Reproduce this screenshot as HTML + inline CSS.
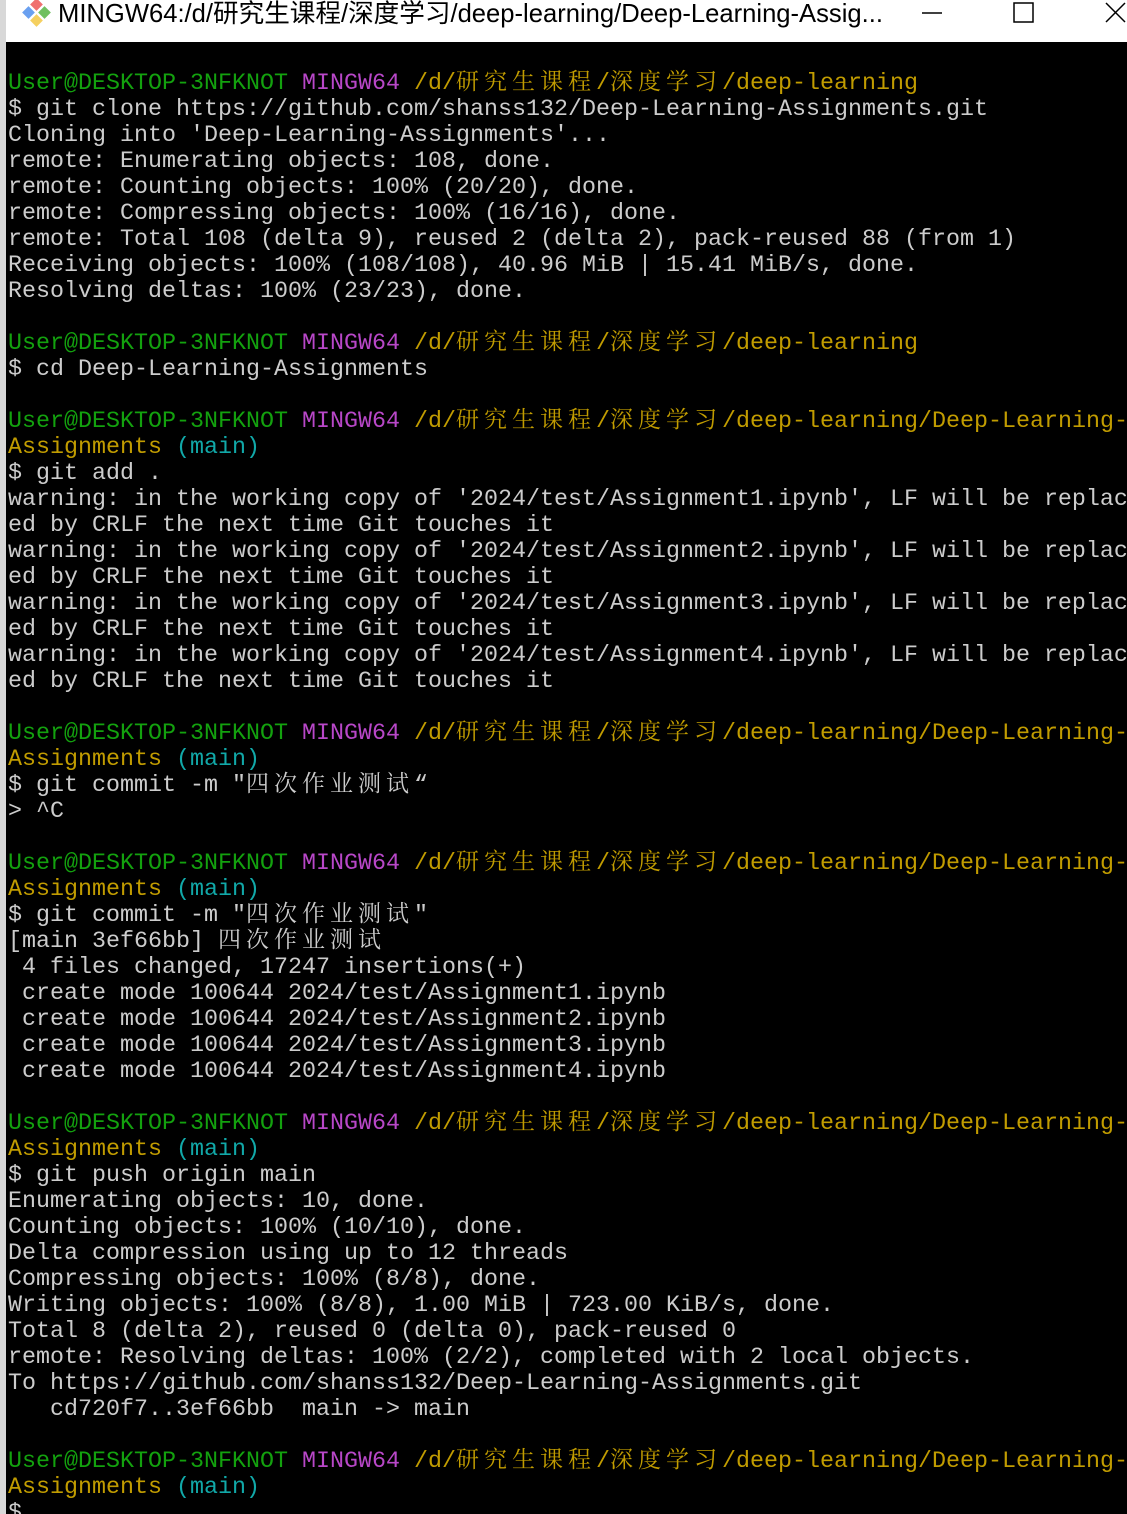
<!DOCTYPE html>
<html><head><meta charset="utf-8"><style>
html,body{margin:0;padding:0;width:1127px;height:1514px;overflow:hidden;background:#000}
#tb{position:absolute;left:0;top:0;width:1127px;height:42px;background:#fff}
#lb{position:absolute;left:0;top:0;width:6px;height:1514px;background:#d8d8d8}
#title{position:absolute;left:58px;top:-7px;font:25.6px "Liberation Sans","Noto Sans CJK SC",sans-serif;color:#000;white-space:nowrap}
#term{position:absolute;left:8px;top:45px;width:1119px;height:1469px;overflow:hidden;margin:0;
font:23.33px/26px "Liberation Mono","Noto Serif CJK SC",monospace;color:#cccccc;white-space:pre}
.g{color:#13a10e}.m{color:#b847c8}.y{color:#c19c00}.c{color:#11a8a8}
.z{font-family:"Noto Serif CJK SC",serif;font-size:23px;letter-spacing:5px;line-height:0}
</style></head><body>
<div id="tb"></div><div id="lb"></div>
<svg style="position:absolute;left:20px;top:0" width="34" height="30" viewBox="0 0 34 30">
<rect x="4" y="8" width="9" height="9" fill="#6aa0f0" transform="rotate(45 8.5 12.5)"/>
<rect x="20" y="8" width="9" height="9" fill="#70c060" transform="rotate(45 24.5 12.5)"/>
<rect x="12" y="16" width="9" height="9" fill="#f5d060" transform="rotate(45 16.5 20.5)"/>
<rect x="12" y="0" width="9" height="9" fill="#f07070" transform="rotate(45 16.5 4.5)"/>
</svg>
<div id="title">MINGW64:/d/研究生课程/深度学习/deep-learning/Deep-Learning-Assig...</div>
<svg style="position:absolute;left:920px;top:0" width="207" height="30">
<line x1="2" y1="13" x2="22" y2="13" stroke="#000" stroke-width="1.5"/>
<rect x="94" y="3" width="19" height="19" fill="none" stroke="#000" stroke-width="1.5"/>
<path d="M186 3 L205 22 M205 3 L186 22" stroke="#000" stroke-width="1.5"/>
</svg>
<pre id="term">

<span class="g">User@DESKTOP-3NFKNOT</span> <span class="m">MINGW64</span> <span class="y">/d/<span class="z">研究生课程</span>/<span class="z">深度学习</span>/deep-learning</span>
$ git clone https://github.com/shanss132/Deep-Learning-Assignments.git
Cloning into 'Deep-Learning-Assignments'...
remote: Enumerating objects: 108, done.
remote: Counting objects: 100% (20/20), done.
remote: Compressing objects: 100% (16/16), done.
remote: Total 108 (delta 9), reused 2 (delta 2), pack-reused 88 (from 1)
Receiving objects: 100% (108/108), 40.96 MiB | 15.41 MiB/s, done.
Resolving deltas: 100% (23/23), done.

<span class="g">User@DESKTOP-3NFKNOT</span> <span class="m">MINGW64</span> <span class="y">/d/<span class="z">研究生课程</span>/<span class="z">深度学习</span>/deep-learning</span>
$ cd Deep-Learning-Assignments

<span class="g">User@DESKTOP-3NFKNOT</span> <span class="m">MINGW64</span> <span class="y">/d/<span class="z">研究生课程</span>/<span class="z">深度学习</span>/deep-learning/Deep-Learning-</span>
<span class="y">Assignments</span> <span class="c">(main)</span>
$ git add .
warning: in the working copy of '2024/test/Assignment1.ipynb', LF will be replac
ed by CRLF the next time Git touches it
warning: in the working copy of '2024/test/Assignment2.ipynb', LF will be replac
ed by CRLF the next time Git touches it
warning: in the working copy of '2024/test/Assignment3.ipynb', LF will be replac
ed by CRLF the next time Git touches it
warning: in the working copy of '2024/test/Assignment4.ipynb', LF will be replac
ed by CRLF the next time Git touches it

<span class="g">User@DESKTOP-3NFKNOT</span> <span class="m">MINGW64</span> <span class="y">/d/<span class="z">研究生课程</span>/<span class="z">深度学习</span>/deep-learning/Deep-Learning-</span>
<span class="y">Assignments</span> <span class="c">(main)</span>
$ git commit -m "<span class="z">四次作业测试</span>“
&gt; ^C

<span class="g">User@DESKTOP-3NFKNOT</span> <span class="m">MINGW64</span> <span class="y">/d/<span class="z">研究生课程</span>/<span class="z">深度学习</span>/deep-learning/Deep-Learning-</span>
<span class="y">Assignments</span> <span class="c">(main)</span>
$ git commit -m "<span class="z">四次作业测试</span>"
[main 3ef66bb] <span class="z">四次作业测试</span>
 4 files changed, 17247 insertions(+)
 create mode 100644 2024/test/Assignment1.ipynb
 create mode 100644 2024/test/Assignment2.ipynb
 create mode 100644 2024/test/Assignment3.ipynb
 create mode 100644 2024/test/Assignment4.ipynb

<span class="g">User@DESKTOP-3NFKNOT</span> <span class="m">MINGW64</span> <span class="y">/d/<span class="z">研究生课程</span>/<span class="z">深度学习</span>/deep-learning/Deep-Learning-</span>
<span class="y">Assignments</span> <span class="c">(main)</span>
$ git push origin main
Enumerating objects: 10, done.
Counting objects: 100% (10/10), done.
Delta compression using up to 12 threads
Compressing objects: 100% (8/8), done.
Writing objects: 100% (8/8), 1.00 MiB | 723.00 KiB/s, done.
Total 8 (delta 2), reused 0 (delta 0), pack-reused 0
remote: Resolving deltas: 100% (2/2), completed with 2 local objects.
To https://github.com/shanss132/Deep-Learning-Assignments.git
   cd720f7..3ef66bb  main -&gt; main

<span class="g">User@DESKTOP-3NFKNOT</span> <span class="m">MINGW64</span> <span class="y">/d/<span class="z">研究生课程</span>/<span class="z">深度学习</span>/deep-learning/Deep-Learning-</span>
<span class="y">Assignments</span> <span class="c">(main)</span>
$
</pre>
</body></html>
